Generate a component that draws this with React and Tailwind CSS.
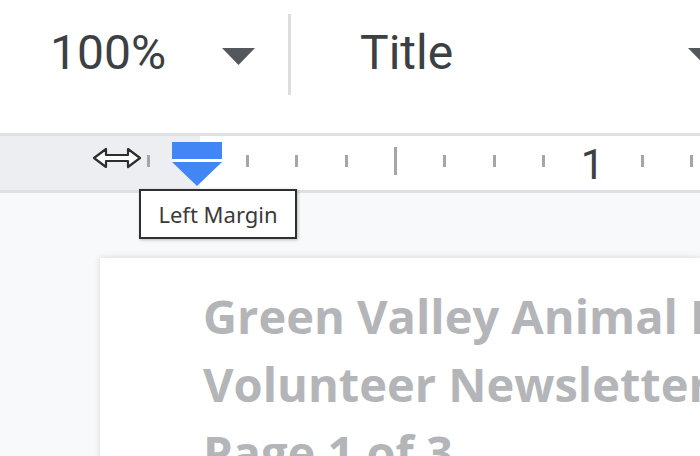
import React from 'react'

const Caret = () => (
  <svg width="33" height="17" viewBox="0 0 33 17" className="shrink-0">
    <path d="M0 0 L33 0 L16.5 17 Z" fill="#54575b" />
  </svg>
)

const ResizeArrow = () => (
  <svg width="50" height="22" viewBox="0 0 50 22">
    <path
      d="M2 11 L14 2 L14 8 L36 8 L36 2 L48 11 L36 20 L36 14 L14 14 L14 20 Z"
      fill="#ffffff"
      stroke="#2e2e2e"
      strokeWidth="2.2"
      strokeLinejoin="round"
    />
  </svg>
)

const MarginMarker = () => (
  <svg width="50" height="45" viewBox="0 0 50 45">
    <rect x="0" y="0" width="50" height="17" fill="#4285f4" />
    <rect x="0" y="17" width="50" height="3" fill="#ffffff" />
    <path d="M0 20 L50 20 L25 44 Z" fill="#4285f4" />
  </svg>
)

// ruler ticks, about 49.4px apart (the one under the marker is hidden)
const ticks = Array.from({ length: 12 }, (_, i) => ({ i, x: 147 + i * 49.4 })).filter(t => t.i !== 1)

export default function App() {
  return (
    <div className="w-[700px] h-[456px] overflow-hidden bg-[#f8f9fa] flex flex-col font-['Roboto',sans-serif]">
      {/* toolbar */}
      <div className="h-[133px] shrink-0 bg-white flex items-start">
        <div className="w-[222px] shrink-0 pl-[50px] pt-[25px] text-[48px] leading-[56px] text-[#3c4043]">100%</div>
        <div className="pt-[48px] shrink-0">
          <Caret />
        </div>
        <div className="ml-[33px] mt-[14px] w-[3px] h-[81px] shrink-0 bg-[#dcdde0]" />
        <div className="flex items-start pl-[69px] shrink-0">
          <div className="w-[328px] shrink-0 pt-[25px] text-[48px] leading-[56px] text-[#3c4043]">Title</div>
          <div className="pt-[48px] shrink-0">
            <Caret />
          </div>
        </div>
      </div>

      {/* ruler */}
      <div className="relative h-[60px] shrink-0 border-y-[3px] border-[#dfe0e3] flex">
        <div className="w-[200px] bg-[#eceef1]" />
        <div className="flex-1 bg-white" />
        <div className="absolute left-[92px] top-[11px]">
          <ResizeArrow />
        </div>
        {ticks.map(({ i, x }) =>
          i === 9 ? (
            <span
              key={i}
              className="absolute top-[5px] -translate-x-1/2 text-[42px] leading-[48px] text-[#3c4043]"
              style={{ left: x + 1 }}
            >
              1
            </span>
          ) : i === 5 ? (
            <div key={i} className="absolute top-[11px] w-[3px] h-[28px] bg-[#a3a6ab]" style={{ left: x }} />
          ) : (
            <div key={i} className="absolute top-[19px] w-[3px] h-[12px] bg-[#a3a6ab]" style={{ left: x }} />
          )
        )}
        <div className="absolute left-[172px] top-[6px]">
          <MarginMarker />
        </div>
      </div>

      {/* document */}
      <div className="relative flex-1 pl-[100px] pt-[65px]">
        <div className="absolute left-[139px] top-[-4px] z-10 w-[158px] h-[50px] bg-white border-2 border-[#2f2f2f] shadow-[1px_1px_3px_rgba(0,0,0,0.25)] flex items-center justify-center font-['Noto_Sans',sans-serif] text-[22px] text-[#3a3a3a]">
          Left Margin
        </div>
        <div className="h-full bg-white shadow-[0_0_7px_rgba(0,0,0,0.14)] pl-[103px] pt-[24px] whitespace-nowrap font-['Open_Sans',sans-serif] font-bold text-[47px] leading-[68px] text-[#b4b5b8]">
          <div>Green Valley Animal Rescue</div>
          <div>Volunteer Newsletter</div>
          <div>Page 1 of 3</div>
        </div>
      </div>
    </div>
  )
}
